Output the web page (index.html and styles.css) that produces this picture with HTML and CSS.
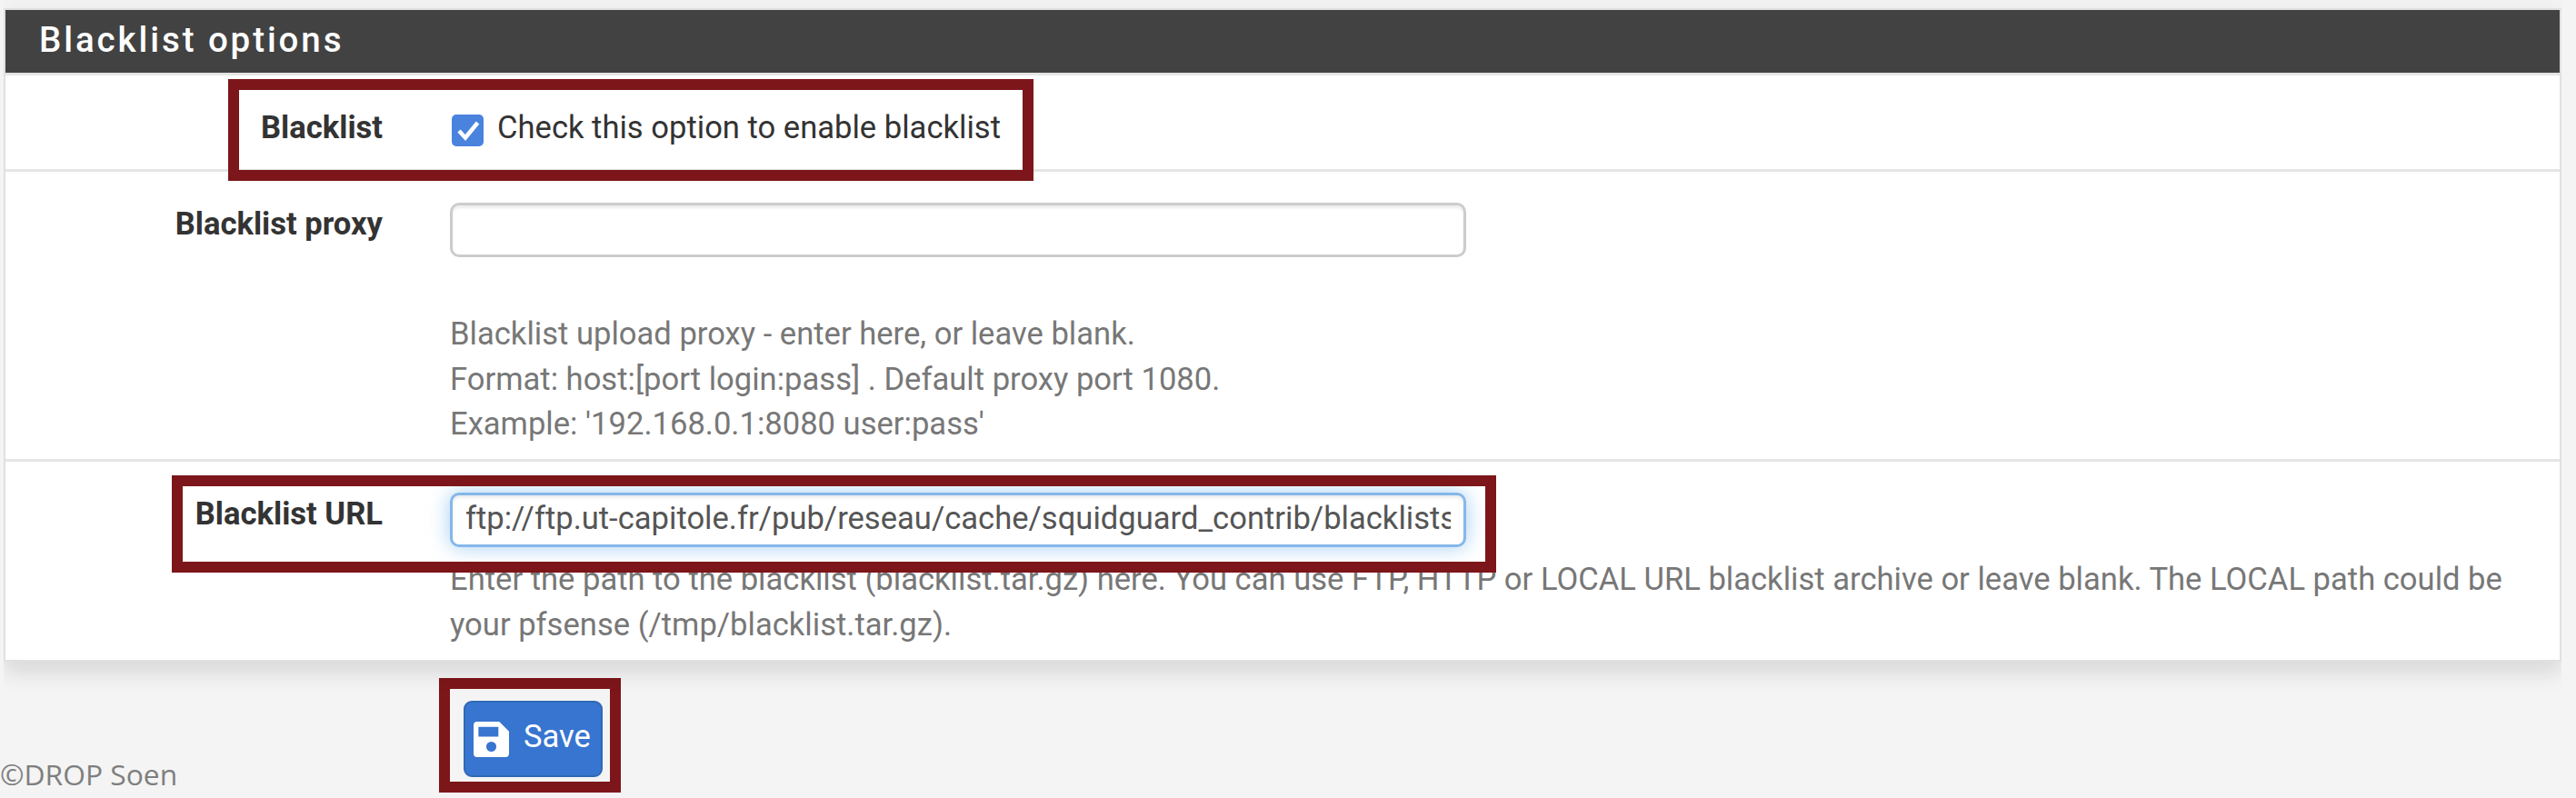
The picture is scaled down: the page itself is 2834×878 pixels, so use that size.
FILE: index.html
```html
<!DOCTYPE html>
<html lang="en">
  <head>
	<meta charset="UTF-8" />
	<meta name="viewport" content="width=device-width, initial-scale=1.0" />
	<title>Blacklist options</title>
	<link rel="stylesheet" href="styles.css">
  </head>
  <body>

	<form class="page">
	  <div class="panel">
		<h2 class="panel-heading">Blacklist options</h2>

		<div class="form-group row-check">
		  <label class="control-label" for="blacklist">Blacklist</label>
		  <div class="control">
			<label class="checkbox">
			  <input type="checkbox" id="blacklist" checked>
			  <svg class="tick" viewBox="0 0 35 35"><path d="M8 18l7 7.500L28.500 9" /></svg>
			  <span>Check this option to enable blacklist</span>
			</label>
		  </div>
		  <div class="highlight highlight-check"></div>
		</div>

		<div class="form-group row-proxy">
		  <label class="control-label" for="proxy">Blacklist proxy</label>
		  <div class="control">
			<input class="form-control" type="text" id="proxy">
			<p class="help proxy-help">Blacklist upload proxy - enter here, or leave blank.<br>
			Format: host:[port login:pass] . Default proxy port 1080.<br>
			Example: '192.168.0.1:8080 user:pass'</p>
		  </div>
		</div>

		<div class="form-group row-url">
		  <label class="control-label" for="url">Blacklist URL</label>
		  <div class="control">
			<input class="form-control focused" type="text" id="url" value="ftp://ftp.ut-capitole.fr/pub/reseau/cache/squidguard_contrib/blacklists">
			<p class="help url-help">Enter the path to the blacklist (blacklist.tar.gz) here. You can use FTP, HTTP or LOCAL URL blacklist archive or leave blank. The LOCAL path could be<br>
			your pfsense (/tmp/blacklist.tar.gz).</p>
		  </div>
		  <div class="highlight highlight-url"></div>
		</div>
	  </div>

	  <div class="actions">
		<span class="copyright">©DROP Soen</span>
		<div class="save-box">
		  <button class="btn" type="button">
			<svg class="save-icon" viewBox="0 0 40 40"><path fill-rule="evenodd" d="M4 0h25l11 11v25a4 4 0 0 1-4 4H4a4 4 0 0 1-4-4V4a4 4 0 0 1 4-4zM5.500 6v11h22.500V6zM20 22.500a5.700 5.700 0 1 0 0 11.400a5.700 5.700 0 1 0 0-11.400z" /></svg>
			<span>Save</span>
		  </button>
		</div>
	  </div>
	</form>

  </body>
</html>
```
FILE: styles.css
```css
* {
  box-sizing: border-box;
  margin: 0;
  padding: 0;
}
body {
  font-family: Roboto, sans-serif;
  font-size: 34.580px;
  line-height: 49.600px;
  color: #333;
  background: #f4f4f4;
  overflow: hidden;
}
.page {
  height: 878px;
  padding: 9px 16px 0 4px;
}
.panel {
  height: 719px;
  background: #fff;
  border: 2px solid #e0e0e0;
  box-shadow: 0 16px 20px rgba(0, 0, 0, 0.08), 0 0 27px rgba(0, 0, 0, 0.05);
  clip-path: inset(-9px 0 -45px 0);
}
.panel-heading {
  height: 69px;
  padding-left: 37px;
  background: #424242;
  color: #fff;
  font-size: 38.500px;
  font-weight: 500;
  line-height: 66px;
  letter-spacing: 2.900px;
}
.form-group {
  position: relative;
  display: flex;
  border-top: 3px solid #e5e5e5;
}
.row-check {
  height: 106px;
}
.row-proxy {
  height: 319px;
}
.control-label {
  width: 415px;
  padding-top: 33px;
  text-align: right;
  font-weight: 700;
}
.control {
  flex: 1;
  padding: 34px 0 0 74px;
}
.checkbox {
  position: relative;
  display: flex;
  align-items: flex-start;
  gap: 15px;
  margin-top: -1px;
}
.checkbox input {
  appearance: none;
  width: 35px;
  height: 35px;
  margin: 10px 0 0 2px;
  border-radius: 5px;
  background: #4a83dd;
}
.tick {
  position: absolute;
  top: 10px;
  left: 2px;
  width: 35px;
  height: 35px;
  fill: none;
  stroke: #fff;
  stroke-width: 4.500;
}
.form-control {
  display: block;
  width: 1118px;
  height: 60px;
  padding: 0 14px 4px;
  border: 3px solid #ccc;
  border-radius: 10px;
  background: #fff;
  color: #555;
  font: inherit;
  box-shadow: inset 0 3px 3px rgba(0, 0, 0, 0.075);
}
.focused {
  border-color: #85b7ea;
  box-shadow: inset 0 3px 3px rgba(0, 0, 0, 0.075), 0 0 22px rgba(102, 175, 233, 0.6);
}
.help {
  color: #777;
  white-space: nowrap;
}
.proxy-help {
  margin-top: 60px;
}
.url-help {
  margin-top: 11px;
}
/* frames drawn over the form */
.highlight {
  position: absolute;
  z-index: 1;
  border: 12px solid #7c161a;
}
.highlight-check {
  top: 4px;
  left: 245px;
  width: 886px;
  height: 112px;
}
.highlight-url {
  top: 15px;
  left: 183px;
  width: 1457px;
  height: 107px;
}
.actions {
  display: flex;
  align-items: flex-start;
  padding-top: 18px;
}
.copyright {
  width: 483px;
  margin: 81px 0 0 -4px;
  color: #7f7f7f;
  font-family: "Open Sans", sans-serif;
  font-size: 31.800px;
}
.save-box {
  width: 200px;
  height: 126px;
  padding: 13px 8px 0 15px;
  border: 12px solid #7c161a;
}
.btn {
  display: flex;
  align-items: center;
  gap: 16px;
  width: 153px;
  height: 84px;
  padding: 0 0 0 9px;
  border: 2px solid #3069b5;
  border-radius: 9px;
  background: #3875d0;
  color: #fff;
  font: inherit;
}
.btn span {
  padding-bottom: 4px;
}
.save-icon {
  width: 39px;
  height: 39px;
  fill: #fff;
}
```
